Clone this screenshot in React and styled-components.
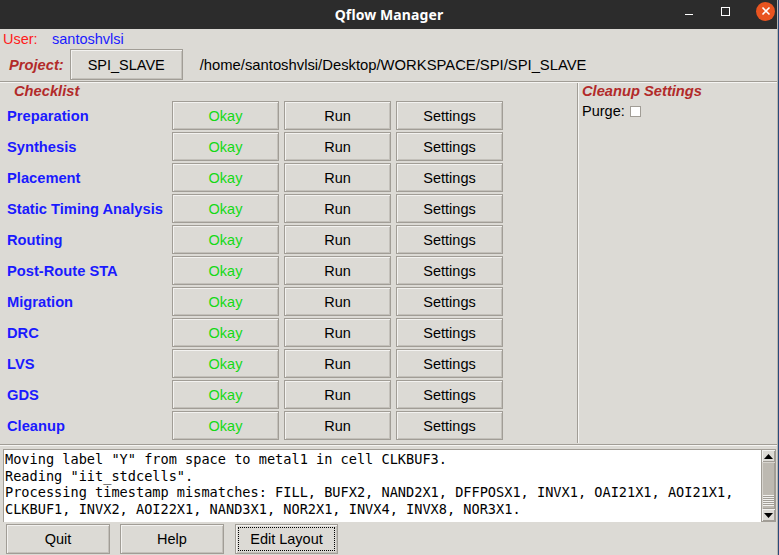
import styled, { createGlobalStyle } from "styled-components";

const steps = [
    "Preparation",
    "Synthesis",
    "Placement",
    "Static Timing Analysis",
    "Routing",
    "Post-Route STA",
    "Migration",
    "DRC",
    "LVS",
    "GDS",
    "Cleanup",
];

const logLines = [
    'Moving label "Y" from space to metal1 in cell CLKBUF3.',
    'Reading "iit_stdcells".',
    "Processing timestamp mismatches: FILL, BUFX2, NAND2X1, DFFPOSX1, INVX1, OAI21X1, AOI21X1,",
    "CLKBUF1, INVX2, AOI22X1, NAND3X1, NOR2X1, INVX4, INVX8, NOR3X1.",
];

function App() {
    return (
        <>
            <GlobalStyle />
            <Window>
                <TitleBar>
                    <Title>Qflow Manager</Title>
                    <WindowControls>
                        <Minimize />
                        <Maximize />
                        <Close>
                            <svg width="10" height="10" viewBox="0 0 10 10">
                                <path d="M1.5 1.5 L8.5 8.5 M8.5 1.5 L1.5 8.5" stroke="#fff" strokeWidth="1.6" />
                            </svg>
                        </Close>
                    </WindowControls>
                </TitleBar>

                <Body>
                    <UserRow>
                        <UserLabel>User:</UserLabel>
                        <UserName>santoshvlsi</UserName>
                    </UserRow>
                    <ProjectRow>
                        <Heading>Project:</Heading>
                        <Button $width="113px" $height="31px">SPI_SLAVE</Button>
                        <Path>/home/santoshvlsi/Desktop/WORKSPACE/SPI/SPI_SLAVE</Path>
                    </ProjectRow>
                    <HRule />

                    <Main>
                        <Checklist>
                            <Heading $indent="14px">Checklist</Heading>
                            <StepGrid>
                                {steps.map(step => (
                                    <Step key={step}>
                                        <StepName>{step}</StepName>
                                        <Button $ok>Okay</Button>
                                        <Button>Run</Button>
                                        <Button>Settings</Button>
                                    </Step>
                                ))}
                            </StepGrid>
                        </Checklist>
                        <VRule />
                        <Cleanup>
                            <Heading>Cleanup Settings</Heading>
                            <PurgeRow>
                                Purge:
                                <Check />
                            </PurgeRow>
                        </Cleanup>
                    </Main>
                    <HRule $gap="1px 0 3px" />

                    <LogArea>
                        <LogText>
                            {logLines.map((line, i) => (
                                <div key={i}>{line}</div>
                            ))}
                        </LogText>
                        <ScrollBar>
                            <Arrow>
                                <svg width="9" height="5" viewBox="0 0 9 5"><path d="M0 5 L4.5 0 L9 5 Z" fill="#000" /></svg>
                            </Arrow>
                            <Thumb>
                                <Grip />
                            </Thumb>
                            <Arrow>
                                <svg width="9" height="5" viewBox="0 0 9 5"><path d="M0 0 L4.5 5 L9 0 Z" fill="#000" /></svg>
                            </Arrow>
                        </ScrollBar>
                    </LogArea>

                    <BottomBar>
                        <Button $width="104px" $height="30px">Quit</Button>
                        <Button $width="104px" $height="30px">Help</Button>
                        <Button $width="103px" $height="30px" $focused>Edit Layout</Button>
                    </BottomBar>
                </Body>
            </Window>
        </>
    );
}

const GlobalStyle = createGlobalStyle`
    html, body {
        margin: 0;
        padding: 0;
        background: #2a4a7a;
    }
    body {
        width: 779px;
        height: 555px;
        overflow: hidden;
        font-family: "Liberation Sans", Arial, sans-serif;
    }
`;

const Window = styled.div`
    width: 777px;
    height: 555px;
    display: flex;
    flex-direction: column;
    background: #dcdad5;
    border-right: 1px solid #b8b5ae;
`;

const TitleBar = styled.div`
    height: 29px;
    flex-shrink: 0;
    background: #2c2c2c;
    position: relative;
    display: flex;
    align-items: center;
    justify-content: center;
`;

const Title = styled.div`
    color: #ffffff;
    font-family: "Noto Sans", "DejaVu Sans", sans-serif;
    font-weight: 700;
    font-size: 14px;
    letter-spacing: 0.1px;
    margin-left: 1px;
`;

const WindowControls = styled.div`
    position: absolute;
    right: 2px;
    top: 0;
    height: 22px;
    display: flex;
    align-items: center;
`;

const Minimize = styled.span`
    width: 8px;
    height: 1.5px;
    background: #ffffff;
    margin-top: 7px;
    margin-right: 28px;
`;

const Maximize = styled.span`
    width: 7px;
    height: 7px;
    border: 1.2px solid #ffffff;
    margin-right: 26px;
`;

const Close = styled.span`
    width: 19px;
    height: 19px;
    border-radius: 50%;
    background: #e95420;
    display: flex;
    align-items: center;
    justify-content: center;
`;

const Body = styled.div`
    flex: 1;
    display: flex;
    flex-direction: column;
`;

const UserRow = styled.div`
    height: 19px;
    display: flex;
    align-items: center;
    padding-left: 3px;
    font-size: 14.5px;
`;

const UserLabel = styled.span`
    color: #ff1a1a;
    width: 49px;
`;

const UserName = styled.span`
    color: #1a1aff;
`;

const ProjectRow = styled.div`
    height: 33px;
    display: flex;
    align-items: center;
    padding-left: 9px;
    gap: 6px;
`;

const Heading = styled.div`
    color: #b22a2a;
    font-weight: 700;
    font-style: italic;
    font-size: 14.7px;
    padding-left: ${props => props.$indent || "0"};
`;

const Path = styled.span`
    color: #000000;
    font-size: 14.8px;
    margin-left: 11px;
`;

const Button = styled.div`
    width: ${props => props.$width || "auto"};
    height: ${props => props.$height || "29px"};
    box-sizing: border-box;
    display: flex;
    align-items: center;
    justify-content: center;
    background: #dcdad5;
    border: 1px solid #a19d96;
    box-shadow: inset 1px 1px 0 #f3f2f0, inset -1px -1px 0 #c3c0ba;
    color: ${props => (props.$ok ? "#15d915" : "#000000")};
    font-size: 14.5px;
    position: relative;
    ${props =>
        props.$focused &&
        `
        &::after {
            content: "";
            position: absolute;
            inset: 2px;
            border: 1px dotted #000;
        }
    `}
`;

const HRule = styled.div`
    height: 0;
    border-top: 1px solid #a19d96;
    border-bottom: 1px solid #f6f5f3;
    margin: ${props => props.$gap || "0"};
`;

const Main = styled.div`
    height: 360px;
    display: flex;
`;

const Checklist = styled.div`
    width: 577px;
    display: flex;
    flex-direction: column;
`;

const StepGrid = styled.div`
    display: grid;
    grid-template-columns: 160px 107px 107px 107px;
    column-gap: 5px;
    row-gap: 2px;
    padding-left: 7px;
    padding-top: 2px;
`;

const Step = styled.div`
    display: contents;
`;

const StepName = styled.div`
    color: #1a1aff;
    font-weight: 700;
    font-size: 14.7px;
    display: flex;
    align-items: center;
`;

const VRule = styled.div`
    width: 0;
    border-left: 1px solid #a19d96;
    border-right: 1px solid #f6f5f3;
`;

const Cleanup = styled.div`
    flex: 1;
    padding: 0 3px;
    display: flex;
    flex-direction: column;
    gap: 4px;
`;

const PurgeRow = styled.div`
    display: flex;
    align-items: center;
    gap: 5px;
    font-size: 14.5px;
    color: #000;
`;

const Check = styled.span`
    width: 9px;
    height: 9px;
    background: #ffffff;
    border: 1px solid #a19d96;
    margin-top: 1px;
`;

const LogArea = styled.div`
    height: 73px;
    margin: 0 1px 0 3px;
    display: flex;
`;

const LogText = styled.div`
    flex: 1;
    background: #ffffff;
    border-top: 1px solid #a19d96;
    border-left: 1px solid #a19d96;
    padding: 1px 0 0 1px;
    font-family: "DejaVu Sans Mono", monospace;
    font-size: 13.6px;
    line-height: 16.6px;
    color: #000;
    white-space: pre;
    overflow: hidden;
`;

const ScrollBar = styled.div`
    width: 15px;
    display: flex;
    flex-direction: column;
    background: #cfccc6;
    border: 1px solid #a19d96;
    box-sizing: border-box;
`;

const Arrow = styled.div`
    height: 12px;
    display: flex;
    align-items: center;
    justify-content: center;
    background: #dcdad5;
    box-shadow: inset 1px 1px 0 #f3f2f0, inset -1px -1px 0 #a19d96;
`;

const Thumb = styled.div`
    flex: 1;
    background: #bdb9b1;
    box-shadow: inset 1px 1px 0 #d7d4ce, inset -1px -1px 0 #a19d96;
    display: flex;
    align-items: flex-end;
    justify-content: center;
    padding-bottom: 3px;
`;

const Grip = styled.div`
    width: 11px;
    height: 11px;
    background: repeating-linear-gradient(#f2f1ee 0 1px, #a19d96 1px 2px);
`;

const BottomBar = styled.div`
    display: flex;
    gap: 10px;
    padding: 2px 0 0 6px;

    & > div:last-child {
        margin-left: 1px;
    }
`;

export default App;
